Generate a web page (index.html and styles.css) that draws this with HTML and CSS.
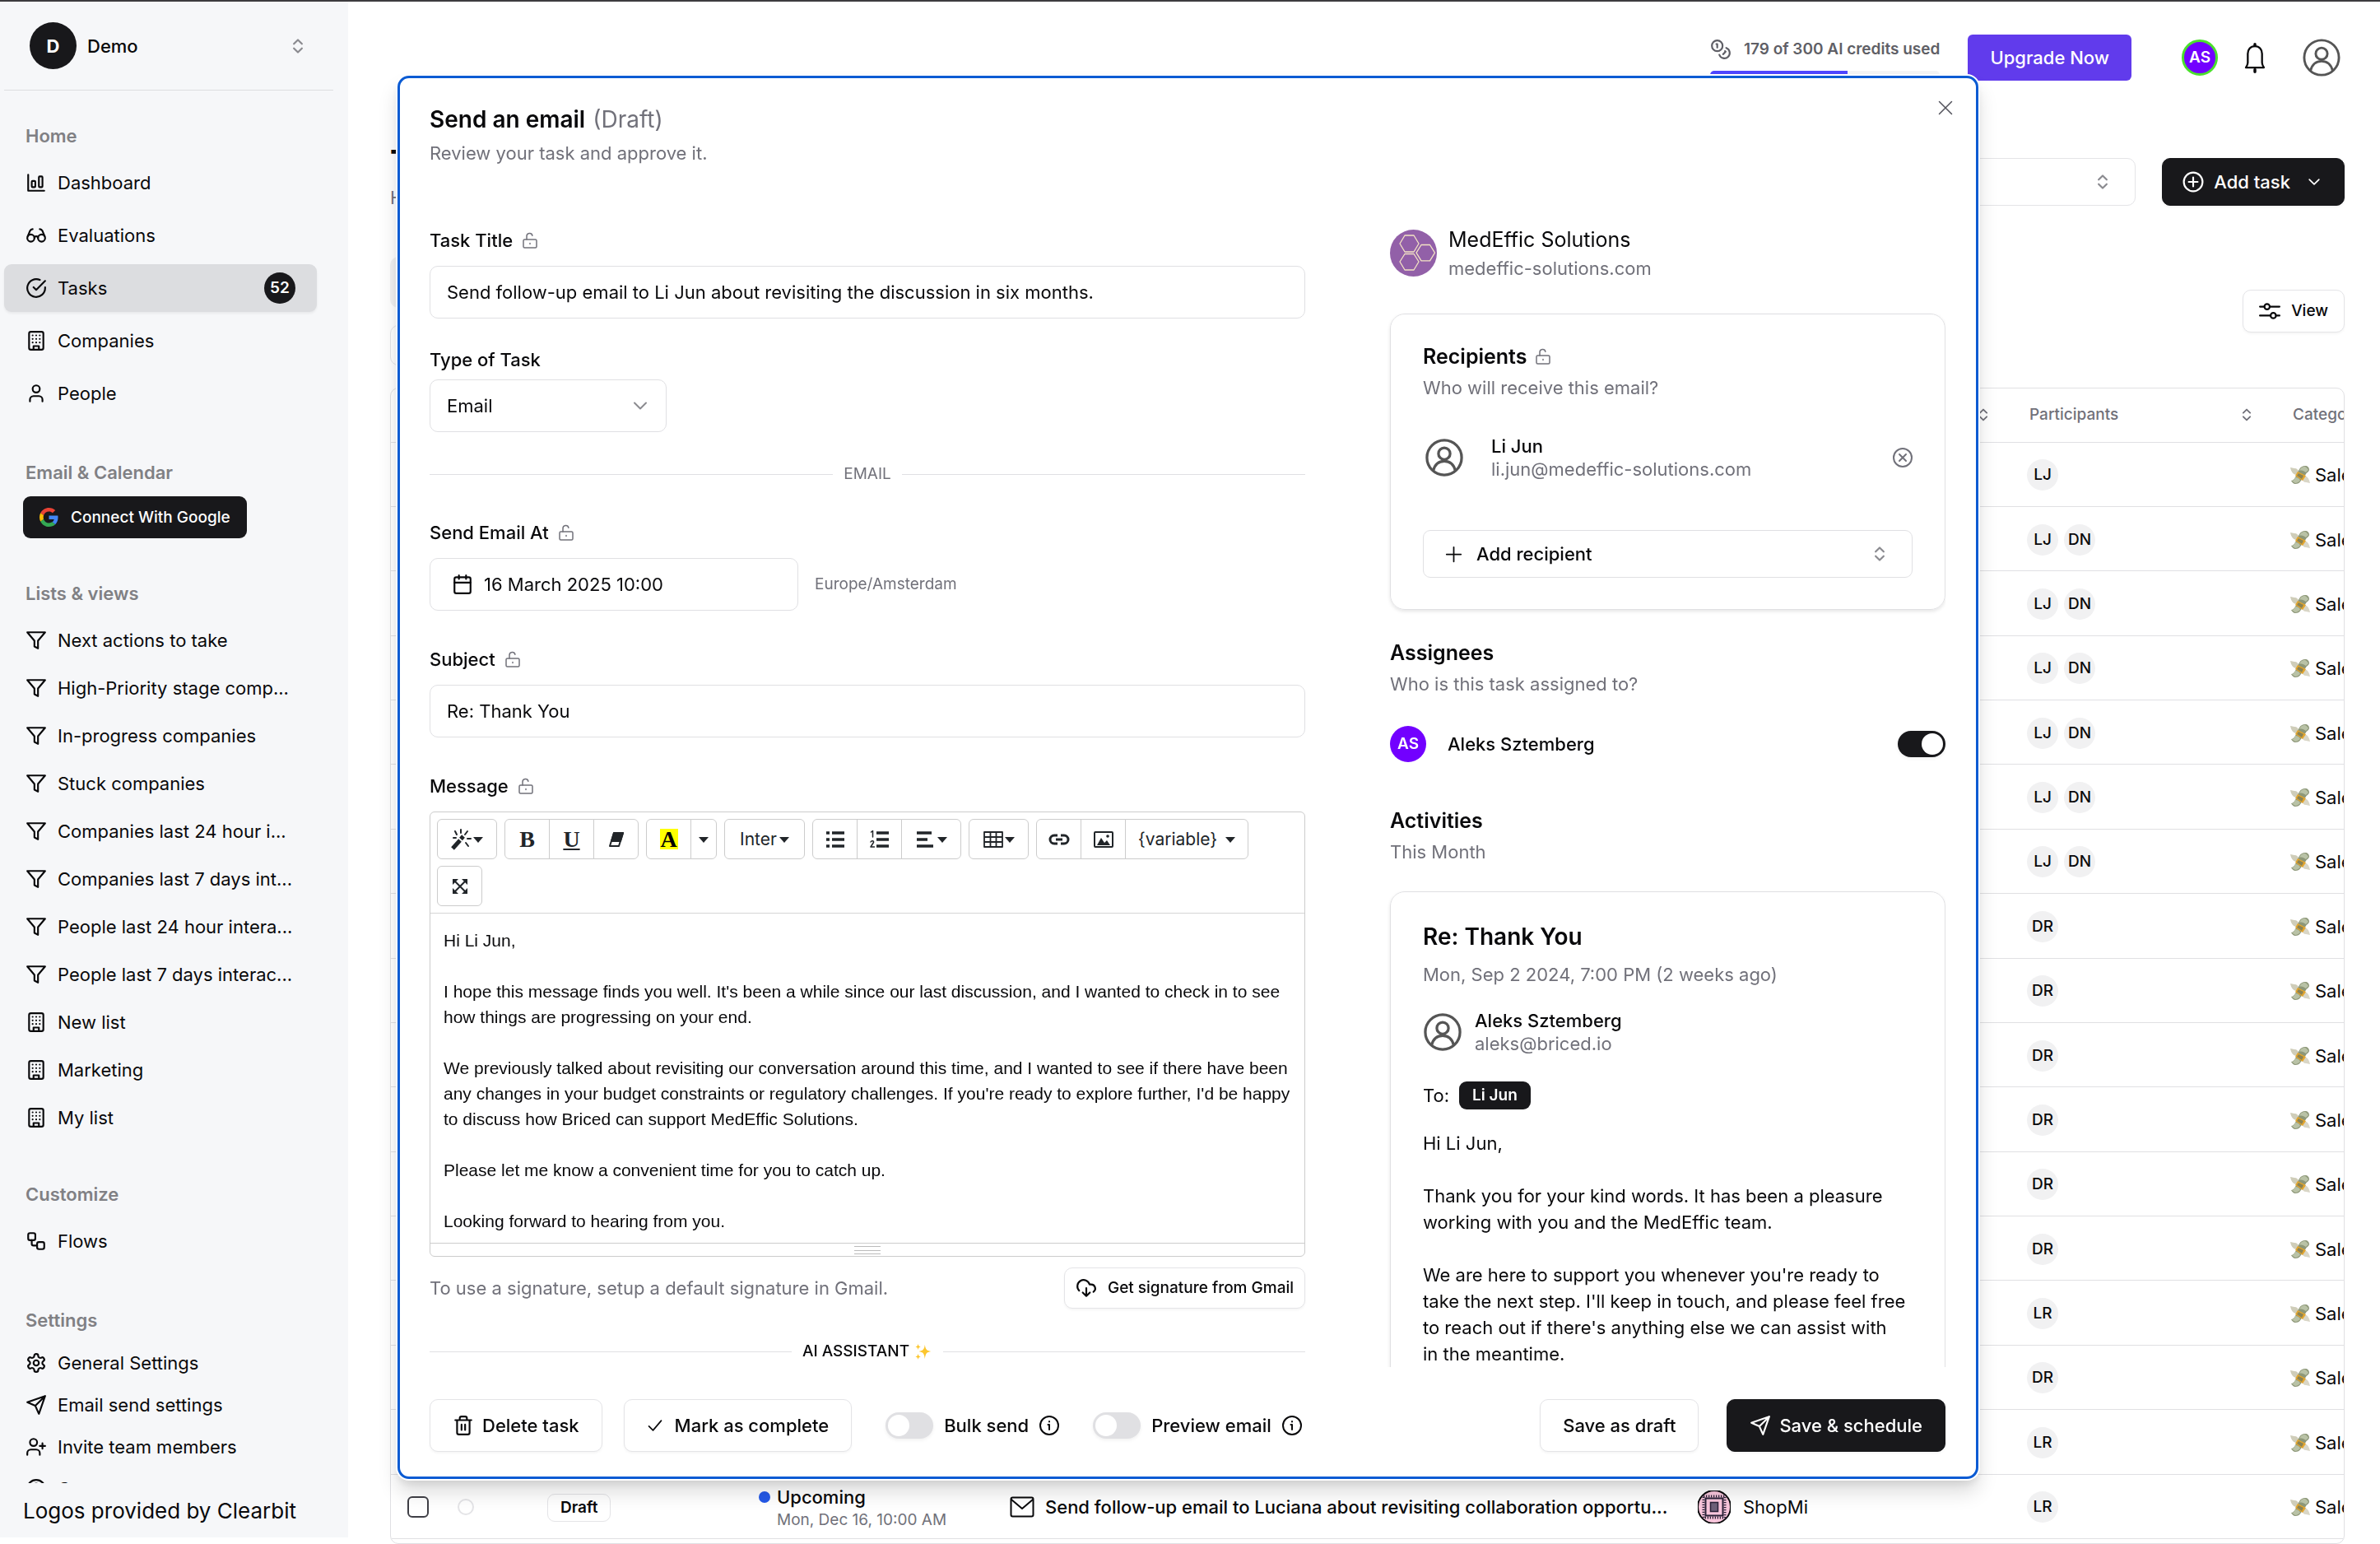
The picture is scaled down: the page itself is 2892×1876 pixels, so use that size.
FILE: index.html
```
<!DOCTYPE html>
<html lang="en">
<head>
  <meta charset="UTF-8">
  <meta name="viewport" content="width=device-width, initial-scale=1.0">
  <link rel="stylesheet" href="styles.css">
  <title>Tasks</title>
</head>
<body>

<svg class="sprite" aria-hidden="true">
  <symbol id="i-sort" viewBox="0 0 24 24"><path d="m7.500 9.500 4.500-4.500 4.500 4.500M7.500 14.500l4.500 4.500 4.500-4.500"/></symbol>
  <symbol id="i-chevron" viewBox="0 0 24 24"><path d="m5 8.500 7 7 7-7"/></symbol>
  <symbol id="i-chart" viewBox="0 0 24 24"><path d="M3 3v18h18"/><rect x="7" y="10" width="4" height="7" rx="1"/><rect x="15" y="5" width="4" height="12" rx="1"/></symbol>
  <symbol id="i-glasses" viewBox="0 0 24 24"><circle cx="6" cy="15" r="4"/><circle cx="18" cy="15" r="4"/><path d="M14 15a2 2 0 0 0-4 0M2.500 13 5 7c.7-1.300 1.400-2 3-2M21.500 13 19 7c-.7-1.300-1.500-2-3-2"/></symbol>
  <symbol id="i-task" viewBox="0 0 24 24"><path d="M22 11.080V12a10 10 0 1 1-5.930-9.140M22 4 12 14.010l-3-3"/></symbol>
  <symbol id="i-building" viewBox="0 0 24 24"><rect x="4" y="2" width="16" height="20" rx="2"/><path d="M9 22v-4h6v4M8 6h.01M12 6h.01M16 6h.01M8 10h.01M12 10h.01M16 10h.01M8 14h.01M12 14h.01M16 14h.01"/></symbol>
  <symbol id="i-user" viewBox="0 0 24 24"><path d="M19 21v-2a4 4 0 0 0-4-4H9a4 4 0 0 0-4 4v2"/><circle cx="12" cy="7" r="4"/></symbol>
  <symbol id="i-funnel" viewBox="0 0 24 24"><path d="M22 3H2l8 9.460V19l4 2v-8.540z"/></symbol>
  <symbol id="i-flow" viewBox="0 0 24 24"><rect x="3" y="3" width="8" height="8" rx="2"/><path d="M7 11v4a2 2 0 0 0 2 2h4"/><rect x="13" y="13" width="8" height="8" rx="2"/></symbol>
  <symbol id="i-gear" viewBox="0 0 24 24"><path d="M12.220 2h-.44a2 2 0 0 0-2 2v.18a2 2 0 0 1-1 1.730l-.43.25a2 2 0 0 1-2 0l-.15-.08a2 2 0 0 0-2.730.73l-.22.38a2 2 0 0 0 .73 2.730l.15.1a2 2 0 0 1 1 1.720v.51a2 2 0 0 1-1 1.740l-.15.09a2 2 0 0 0-.73 2.730l.22.38a2 2 0 0 0 2.730.73l.15-.08a2 2 0 0 1 2 0l.43.25a2 2 0 0 1 1 1.730V20a2 2 0 0 0 2 2h.44a2 2 0 0 0 2-2v-.18a2 2 0 0 1 1-1.730l.43-.25a2 2 0 0 1 2 0l.15.08a2 2 0 0 0 2.730-.73l.22-.39a2 2 0 0 0-.73-2.730l-.15-.08a2 2 0 0 1-1-1.740v-.5a2 2 0 0 1 1-1.740l.15-.09a2 2 0 0 0 .73-2.730l-.22-.38a2 2 0 0 0-2.730-.73l-.15.08a2 2 0 0 1-2 0l-.43-.25a2 2 0 0 1-1-1.730V4a2 2 0 0 0-2-2z"/><circle cx="12" cy="12" r="3"/></symbol>
  <symbol id="i-send" viewBox="0 0 24 24"><path d="m22 2-7 20-4-9-9-4zM22 2 11 13"/></symbol>
  <symbol id="i-invite" viewBox="0 0 24 24"><path d="M16 21v-2a4 4 0 0 0-4-4H6a4 4 0 0 0-4 4v2M19 8v6M22 11h-6"/><circle cx="9" cy="7" r="4"/></symbol>
  <symbol id="i-contact" viewBox="0 0 24 24"><circle cx="12" cy="12" r="10"/><circle cx="12" cy="9" r="3"/><path d="M6 20c1-4 11-4 12 0"/></symbol>
  <symbol id="i-coins" viewBox="0 0 24 24"><circle cx="8" cy="8" r="6"/><path d="M18.090 10.370A6 6 0 1 1 10.340 18M7 6h1v4M16.710 13.880l.7.71-2.820 2.820"/></symbol>
  <symbol id="i-bell" viewBox="0 0 24 32"><path d="M12 3.500c-4.700 0-7.500 3.600-7.500 8v9.500c0 2-1 3.500-2 5h19c-1-1.500-2-3-2-5v-9.500c0-4.400-2.800-8-7.500-8z"/><path d="M12 1.500v1.500M12 28v2.500" stroke-width="3"/></symbol>
  <symbol id="i-account" viewBox="0 0 24 24"><circle cx="12" cy="12" r="11"/><circle cx="12" cy="9.500" r="3.700"/><path d="M5 20.300c1-4 3.500-6 7-6s6 2 7 6"/></symbol>
  <symbol id="i-plus" viewBox="0 0 24 24"><path d="M12 2v20M2 12h20"/></symbol>
  <symbol id="i-plus-circle" viewBox="0 0 24 24"><circle cx="12" cy="12" r="10.500"/><path d="M12 7v10M7 12h10"/></symbol>
  <symbol id="i-x-circle" viewBox="0 0 24 24"><circle cx="12" cy="12" r="11"/><path d="m8 8 8 8M16 8l-8 8"/></symbol>
  <symbol id="i-x" viewBox="0 0 24 24"><path d="m2 2 20 20M22 2 2 22"/></symbol>
  <symbol id="i-sliders" viewBox="0 0 24 24"><circle cx="9" cy="7" r="3"/><circle cx="16" cy="17" r="3"/><path d="M1 7h5M12 7h11M1 17h12M19 17h4"/></symbol>
  <symbol id="i-lock" viewBox="0 0 20 20"><rect x="2" y="9" width="16" height="10" rx="1.500"/><path d="M6 9V5a3.500 3.500 0 0 1 6.900-.8M10 13.500v1"/></symbol>
  <symbol id="i-calendar" viewBox="0 0 24 24"><rect x="3" y="4" width="18" height="18" rx="2"/><path d="M16 2v4M8 2v4M3 10h18"/></symbol>
  <symbol id="i-cloud" viewBox="0 0 24 24"><path d="M4 14.899A7 7 0 1 1 15.710 8h1.790a4.500 4.500 0 0 1 2.500 8.242M12 12v9M8 17l4 4 4-4"/></symbol>
  <symbol id="i-trash" viewBox="0 0 24 24"><path d="M3 6h18M19 6v14a2 2 0 0 1-2 2H7a2 2 0 0 1-2-2V6M8 6V4a2 2 0 0 1 2-2h4a2 2 0 0 1 2 2v2M10 11v6M14 11v6"/></symbol>
  <symbol id="i-check" viewBox="0 0 24 24"><path d="m3 13 6 6L21 5"/></symbol>
  <symbol id="i-info" viewBox="0 0 24 24"><circle cx="12" cy="12" r="11"/><path d="M10.500 11h1.500v6M12 7v.5"/></symbol>
  <symbol id="i-mail" viewBox="0 0 30 26"><rect x="1.500" y="1.500" width="27" height="23" rx="2"/><path d="m2 4 13 11L28 4"/></symbol>
  <symbol id="i-caret" viewBox="0 0 12 8"><path d="M0 1h12L6 8z" fill="currentColor" stroke="none"/></symbol>
  <symbol id="i-money" viewBox="0 0 24 24">
    <g stroke="none">
      <path d="M0 3c2 0 3 1 5 1 3 0 5 2 6 5l-4 3C3 11 1 8 0 3z" fill="#cfcdb9"/>
      <path d="M24 22c-2 0-3-1-5-1-3 0-4-2-5-4l4-4c3 1 5 4 6 9z" fill="#d9d6c6"/>
      <path d="M11 5c2-3 4-4 7-4s5 2 5 5c-1 3-3 3-4 5l-6 8c-2 3-4 4-7 4-2 0-4-2-5-4 2 0 4-2 5-4z" fill="#8d9778"/>
      <path d="M12 5c2-3 4-3 6-3 2 1 3 2 4 4l-3 3c-3-2-5-3-8-2zM6 15c3 0 5 1 6 4-2 2-4 3-6 3-2-1-3-2-4-3 2 0 3-2 4-4z" fill="#b9c2a6"/>
      <path d="m9 8 10 5-4 6-9-6z" fill="#e3a52d"/>
      <path d="m10 10 6 3-2 4-6-4z" fill="#8a8354"/>
    </g>
  </symbol>
  <symbol id="i-sparkles" viewBox="0 0 24 24">
    <g stroke="none" fill="#fcc62d">
      <path d="M14 3c.8 6 2 8 8 9-6 1-7.200 3-8 10-.8-7-2-9-8-10 6-1 7.200-3 8-9z"/>
      <path d="M5 2c.4 2.600 1 3.600 3.500 4C6 6.400 5.400 7.400 5 10c-.4-2.600-1-3.600-3.500-4C4 5.600 4.600 4.600 5 2zM5 15c.4 2.600 1 3.600 3.500 4-2.500.4-3.100 1.400-3.500 4-.4-2.600-1-3.600-3.500-4 2.500-.4 3.100-1.400 3.500-4z"/>
    </g>
  </symbol>
</svg>

<div class="app">
  <aside class="sidebar">
    <div class="sidebar-scroll">
      <button class="workspace">
        <span class="workspace-logo">D</span>
        <span class="workspace-name">Demo</span>
        <svg class="icon faint"><use href="#i-sort"/></svg>
      </button>

      <h2 class="nav-title nav-home">Home</h2>
      <nav class="nav">
        <a href="#"><svg class="icon"><use href="#i-chart"/></svg>Dashboard</a>
        <a href="#"><svg class="icon"><use href="#i-glasses"/></svg>Evaluations</a>
        <a href="#" class="active"><svg class="icon"><use href="#i-task"/></svg>Tasks<span class="count">52</span></a>
        <a href="#"><svg class="icon"><use href="#i-building"/></svg>Companies</a>
        <a href="#"><svg class="icon"><use href="#i-user"/></svg>People</a>
      </nav>

      <h2 class="nav-title">Email &amp; Calendar</h2>
      <button class="google">
        <svg class="google-logo" viewBox="0 0 48 48">
          <path fill="#ea4335" d="M24 9.500c3.540 0 6.710 1.220 9.210 3.600l6.850-6.850C35.900 2.380 30.470 0 24 0 14.620 0 6.510 5.380 2.560 13.220l7.980 6.190C12.430 13.720 17.740 9.500 24 9.500z"/>
          <path fill="#4285f4" d="M46.980 24.550c0-1.570-.15-3.090-.38-4.550H24v9.020h12.940c-.58 2.960-2.260 5.480-4.780 7.180l7.730 6c4.510-4.180 7.090-10.360 7.090-17.650z"/>
          <path fill="#fbbc05" d="M10.530 28.590c-.48-1.450-.76-2.990-.76-4.590s.27-3.140.76-4.590l-7.980-6.190C.92 16.460 0 20.120 0 24c0 3.880.92 7.540 2.560 10.780l7.970-6.190z"/>
          <path fill="#34a853" d="M24 48c6.480 0 11.930-2.130 15.890-5.810l-7.730-6c-2.150 1.450-4.920 2.300-8.160 2.300-6.260 0-11.570-4.220-13.470-9.910l-7.980 6.190C6.510 42.620 14.620 48 24 48z"/>
        </svg>
        Connect With Google
      </button>

      <h2 class="nav-title">Lists &amp; views</h2>
      <nav class="nav views">
        <a href="#"><svg class="icon"><use href="#i-funnel"/></svg>Next actions to take</a>
        <a href="#"><svg class="icon"><use href="#i-funnel"/></svg>High-Priority stage comp...</a>
        <a href="#"><svg class="icon"><use href="#i-funnel"/></svg>In-progress companies</a>
        <a href="#"><svg class="icon"><use href="#i-funnel"/></svg>Stuck companies</a>
        <a href="#"><svg class="icon"><use href="#i-funnel"/></svg>Companies last 24 hour i...</a>
        <a href="#"><svg class="icon"><use href="#i-funnel"/></svg>Companies last 7 days int...</a>
        <a href="#"><svg class="icon"><use href="#i-funnel"/></svg>People last 24 hour intera...</a>
        <a href="#"><svg class="icon"><use href="#i-funnel"/></svg>People last 7 days interac...</a>
        <a href="#"><svg class="icon"><use href="#i-building"/></svg>New list</a>
        <a href="#"><svg class="icon"><use href="#i-building"/></svg>Marketing</a>
        <a href="#"><svg class="icon"><use href="#i-building"/></svg>My list</a>
      </nav>

      <h2 class="nav-title nav-customize">Customize</h2>
      <nav class="nav views">
        <a href="#"><svg class="icon"><use href="#i-flow"/></svg>Flows</a>
      </nav>

      <h2 class="nav-title">Settings</h2>
      <nav class="nav settings">
        <a href="#"><svg class="icon"><use href="#i-gear"/></svg>General Settings</a>
        <a href="#"><svg class="icon"><use href="#i-send"/></svg>Email send settings</a>
        <a href="#"><svg class="icon"><use href="#i-invite"/></svg>Invite team members</a>
        <a href="#"><svg class="icon"><use href="#i-contact"/></svg>Contact</a>
      </nav>
    </div>
    <p class="credit">Logos provided by Clearbit</p>
  </aside>

  <main class="main">
    <header class="topbar">
      <div class="credits">
        <label for="credits"><svg class="icon"><use href="#i-coins"/></svg>179 of 300 AI credits used</label>
        <progress id="credits" value="179" max="300"></progress>
      </div>
      <button class="upgrade">Upgrade Now</button>
      <span class="avatar avatar-ring">AS</span>
      <button class="plain bell" aria-label="Notifications"><svg><use href="#i-bell"/></svg></button>
      <button class="plain account" aria-label="Account"><svg><use href="#i-account"/></svg></button>
    </header>

    <div class="page-head">
      <div>
        <h1>Tasks</h1>
        <p>Here are your tasks</p>
      </div>
      <div class="page-actions">
        <button class="picker" aria-label="Filter by person"><svg class="icon faint"><use href="#i-sort"/></svg></button>
        <button class="btn dark add-task"><svg class="icon"><use href="#i-plus-circle"/></svg>Add task<svg class="icon-sm"><use href="#i-chevron"/></svg></button>
      </div>
    </div>

    <div class="table-tools">
      <div>
        <div class="tabs"></div>
        <input class="search" type="text" aria-label="Search tasks">
      </div>
      <button class="btn small view"><svg class="icon"><use href="#i-sliders"/></svg>View</button>
    </div>

    <div class="table-wrap">
      <table>
        <colgroup>
          <col class="c-check"><col class="c-state"><col class="c-status"><col class="c-due"><col class="c-title"><col class="c-company"><col class="c-people"><col class="c-category">
        </colgroup>
        <thead>
          <tr>
            <th></th><th></th><th></th><th></th><th></th>
            <th><div class="th"><span></span><svg class="icon-sort"><use href="#i-sort"/></svg></div></th>
            <th><div class="th"><span>Participants</span><svg class="icon-sort"><use href="#i-sort"/></svg></div></th>
            <th>Category</th>
          </tr>
        </thead>
        <tbody id="rows"></tbody>
      </table>
    </div>
  </main>
</div>

<div class="dialog" role="dialog" aria-labelledby="dialog-title">
  <header class="dialog-head">
    <h2 id="dialog-title">Send an email <span>(Draft)</span></h2>
    <p>Review your task and approve it.</p>
    <button class="plain close" aria-label="Close"><svg><use href="#i-x"/></svg></button>
  </header>

  <div class="dialog-body">
    <form class="form">
      <div class="field">
        <label for="title">Task Title <svg class="lock"><use href="#i-lock"/></svg></label>
        <input id="title" type="text" value="Send follow-up email to Li Jun about revisiting the discussion in six months.">
      </div>
      <div class="field type">
        <label for="type">Type of Task</label>
        <div class="select">
          <select id="type"><option>Email</option></select>
          <svg><use href="#i-chevron"/></svg>
        </div>
      </div>
      <div class="divider">EMAIL</div>
      <div class="field">
        <label for="date">Send Email At <svg class="lock"><use href="#i-lock"/></svg></label>
        <div class="date-row">
          <button type="button" id="date" class="date"><svg class="icon"><use href="#i-calendar"/></svg>16 March 2025 10:00</button>
          <span>Europe/Amsterdam</span>
        </div>
      </div>
      <div class="field">
        <label for="subject">Subject <svg class="lock"><use href="#i-lock"/></svg></label>
        <input id="subject" type="text" value="Re: Thank You">
      </div>
      <div class="field message">
        <label for="message">Message <svg class="lock"><use href="#i-lock"/></svg></label>
        <div class="editor">
          <div class="toolbar">
            <div class="group">
              <button type="button" class="wide" aria-label="Style">
                <svg class="tool" viewBox="0 0 26 26"><path d="m2 24 9-10" stroke-width="5" stroke-linecap="butt"/><path d="m12 12.500 3-3.500" stroke-width="5" stroke-linecap="butt"/><path d="M12 1v4M5 3l2 4M20 3l-3 4M20 12h4M18 17l3 4M3 11h3" stroke-width="2"/></svg><svg class="caret"><use href="#i-caret"/></svg>
              </button>
            </div>
            <div class="group">
              <button type="button" class="serif">B</button>
              <button type="button" class="serif underline">U</button>
              <button type="button" aria-label="Clear formatting"><svg class="tool" viewBox="0 0 26 26"><path d="M10 5h11l-5 16H5z"/><path d="M10 5h11l-3 10H7z" fill="currentColor"/></svg></button>
            </div>
            <div class="group">
              <button type="button" class="serif"><mark>A</mark></button>
              <button type="button" class="slim" aria-label="More colors"><svg class="caret"><use href="#i-caret"/></svg></button>
            </div>
            <div class="group">
              <button type="button" class="text">Inter<svg class="caret"><use href="#i-caret"/></svg></button>
            </div>
            <div class="group">
              <button type="button" aria-label="Bulleted list"><svg class="tool" viewBox="0 0 26 26"><path d="M9 5h15M9 13h15M9 21h15M2 5h4M2 13h4M2 21h4" stroke-width="3.500" stroke-linecap="butt"/></svg></button>
              <button type="button" aria-label="Numbered list"><svg class="tool" viewBox="0 0 26 26"><path d="M9 5h15M9 13h15M9 21h15" stroke-width="3.500" stroke-linecap="butt"/><path d="m2.500 4 2-1.500V10M2 16c1-2 4-1.500 3.500.5L2 22h4.500" stroke-width="1.500"/></svg></button>
              <button type="button" class="wide" aria-label="Paragraph"><svg class="tool" viewBox="0 0 26 26"><path d="M2 5h18M2 13h13M2 21h20" stroke-width="3.500" stroke-linecap="butt"/></svg><svg class="caret"><use href="#i-caret"/></svg></button>
            </div>
            <div class="group">
              <button type="button" class="wide" aria-label="Table"><svg class="tool" viewBox="0 0 26 26"><path d="M2 4h22v18H2zM2 10h22M2 16h22M9.500 4v18M16.500 4v18" stroke-width="1.800"/></svg><svg class="caret"><use href="#i-caret"/></svg></button>
            </div>
            <div class="group">
              <button type="button" aria-label="Link"><svg class="tool" viewBox="0 0 26 26"><path d="M11 8H7a5 5 0 0 0 0 10h4M15 8h4a5 5 0 0 1 0 10h-4M9 13h8" stroke-width="3" stroke-linecap="butt"/></svg></button>
              <button type="button" aria-label="Picture"><svg class="tool" viewBox="0 0 26 26"><rect x="2" y="4" width="22" height="18" rx="1"/><path d="m5 20 5-9 4 6 3-3 4 6z" fill="currentColor" stroke="none"/><circle cx="18" cy="9" r="1.800" fill="currentColor" stroke="none"/></svg></button>
              <button type="button" class="text variable">{variable}<svg class="caret"><use href="#i-caret"/></svg></button>
            </div>
            <div class="group">
              <button type="button" aria-label="Full screen"><svg class="tool" viewBox="0 0 26 26"><path d="m5 5 16 16M21 5 5 21" stroke-width="2"/><path d="M4 4h7L4 11zM22 4v7l-7-7zM4 22v-7l7 7zM22 22h-7l7-7z" fill="currentColor" stroke="none"/></svg></button>
            </div>
          </div>
          <textarea id="message">Hi Li Jun,

I hope this message finds you well. It's been a while since our last discussion, and I wanted to check in to see how things are progressing on your end.

We previously talked about revisiting our conversation around this time, and I wanted to see if there have been any changes in your budget constraints or regulatory challenges. If you're ready to explore further, I'd be happy to discuss how Briced can support MedEffic Solutions.

Please let me know a convenient time for you to catch up.

Looking forward to hearing from you.</textarea>
          <div class="resize"><i></i><i></i><i></i></div>
        </div>
      </div>
      <div class="signature">
        <p>To use a signature, setup a default signature in Gmail.</p>
        <button type="button" class="btn small"><svg class="icon"><use href="#i-cloud"/></svg>Get signature from Gmail</button>
      </div>
      <div class="divider assistant"><span>AI ASSISTANT</span><svg><use href="#i-sparkles"/></svg></div>
    </form>

    <div class="side">
      <div class="company">
        <svg class="company-logo" viewBox="0 0 57 57">
          <circle cx="28.500" cy="28.500" r="28.500" fill="#9260a8"/>
          <path fill="none" stroke="#f3e3c4" stroke-width="1.300" d="M18 7h11l6 10-6 10H18l-6-10zM18 29.500h11l6 9.500-6 10H18l-6-10zM38 18.500h10.500l6 9.700-6 9.700H38l-6-9.700z"/>
        </svg>
        <div>
          <p class="company-name">MedEffic Solutions</p>
          <p class="muted">medeffic-solutions.com</p>
        </div>
      </div>

      <section class="card recipients">
        <h3>Recipients <svg class="lock"><use href="#i-lock"/></svg></h3>
        <p class="muted">Who will receive this email?</p>
        <div class="person">
          <svg class="person-icon"><use href="#i-account"/></svg>
          <div>
            <p class="name">Li Jun</p>
            <p class="muted">li.jun@medeffic-solutions.com</p>
          </div>
          <button class="plain remove" aria-label="Remove recipient"><svg><use href="#i-x-circle"/></svg></button>
        </div>
        <button class="add-recipient"><svg class="plus"><use href="#i-plus"/></svg>Add recipient<svg class="icon faint"><use href="#i-sort"/></svg></button>
      </section>

      <section class="assignees">
        <h3>Assignees</h3>
        <p class="muted">Who is this task assigned to?</p>
        <div class="assignee">
          <span class="avatar">AS</span>
          <label for="assigned">Aleks Sztemberg</label>
          <input id="assigned" class="switch" type="checkbox" checked>
        </div>
      </section>

      <section class="activities">
        <h3>Activities</h3>
        <p class="muted">This Month</p>
        <article class="card mail">
          <h4>Re: Thank You</h4>
          <p class="muted">Mon, Sep 2 2024, 7:00 PM (2 weeks ago)</p>
          <div class="sender">
            <svg class="person-icon"><use href="#i-account"/></svg>
            <div>
              <p class="name">Aleks Sztemberg</p>
              <p class="muted">aleks@briced.io</p>
            </div>
          </div>
          <div class="to">To: <span class="badge">Li Jun</span></div>
          <div class="mail-text">
            <p>Hi Li Jun,</p>
            <p>Thank you for your kind words. It has been a pleasure working with you and the MedEffic team.</p>
            <p>We are here to support you whenever you're ready to take the next step. I'll keep in touch, and please feel free to reach out if there's anything else we can assist with<br>in the meantime.</p>
          </div>
        </article>
      </section>
    </div>
  </div>

  <footer class="dialog-foot">
    <button class="btn"><svg class="icon"><use href="#i-trash"/></svg>Delete task</button>
    <button class="btn complete"><svg class="icon-sm"><use href="#i-check"/></svg>Mark as complete</button>
    <div class="option">
      <input id="bulk" class="switch" type="checkbox">
      <label for="bulk">Bulk send</label>
      <svg class="info"><use href="#i-info"/></svg>
    </div>
    <div class="option">
      <input id="preview" class="switch" type="checkbox">
      <label for="preview">Preview email</label>
      <svg class="info"><use href="#i-info"/></svg>
    </div>
    <button class="btn draft">Save as draft</button>
    <button class="btn dark"><svg class="icon"><use href="#i-send"/></svg>Save &amp; schedule</button>
  </footer>
</div>

<script>
  const participants = [
    ['LJ'],
    ['LJ', 'DN'], ['LJ', 'DN'], ['LJ', 'DN'], ['LJ', 'DN'], ['LJ', 'DN'], ['LJ', 'DN'],
    ['DR'], ['DR'], ['DR'], ['DR'], ['DR'], ['DR'],
    ['LR'], ['DR'], ['LR'], ['LR']
  ];

  // the open task covers every row but the last one
  const lastRow = `
    <td><input type="checkbox" class="check" aria-label="Select task"></td>
    <td><span class="state"></span></td>
    <td><span class="status">Draft</span></td>
    <td><div class="due"><i></i><div><p class="name">Upcoming</p><p>Mon, Dec 16, 10:00 AM</p></div></div></td>
    <td><div class="task-title"><svg><use href="#i-mail"/></svg>Send follow-up email to Luciana about revisiting collaboration opportu...</div></td>
    <td><div class="shop">
      <svg viewBox="0 0 40 40"><circle cx="20" cy="20" r="20" fill="#f9c6dc"/>
        <path d="M7 7h26v26H7z" fill="none" stroke="#2b2238" stroke-width="3" stroke-dasharray="1.300 1.700"/>
        <path d="M9.500 9.500h21v21h-21z" fill="#f9c6dc" stroke="#2b2238" stroke-width="2"/>
        <path d="M15.500 14.500h9v11h-9z" fill="#6d6078" stroke="#2b2238" stroke-width="1.500"/></svg>ShopMi</div></td>`;

  document.getElementById('rows').innerHTML = participants.map((people, index) => `
    <tr>
      ${index === participants.length - 1 ? lastRow : '<td></td>'.repeat(6)}
      <td><div class="people">${people.map(p => `<span>${p}</span>`).join('')}</div></td>
      <td><div class="category"><svg><use href="#i-money"/></svg>Sales</div></td>
    </tr>`).join('');
</script>

</body>
</html>
```
FILE: styles.css
```
* {
  box-sizing: border-box;
}

body {
  margin: 0;
  height: 100vh;
  overflow: hidden;
  border-top: 2px solid #3d3b3f;
  font-family: Inter, sans-serif;
  font-size: 22px;
  line-height: 32px;
  color: #09090b;
  background: #fff;
}

h1, h2, h3, h4, p {
  margin: 0;
}

a {
  color: inherit;
  text-decoration: none;
}

button, input, select, textarea {
  font: inherit;
  color: inherit;
}

button {
  margin: 0;
  padding: 0;
  cursor: pointer;
}

svg {
  flex: none;
  fill: none;
  stroke: currentColor;
  stroke-width: 2;
  stroke-linecap: round;
  stroke-linejoin: round;
}

.sprite {
  position: absolute;
  width: 0;
  height: 0;
}

.icon {
  width: 26px;
  height: 26px;
}

.icon-sm {
  width: 20px;
  height: 20px;
}

.faint {
  color: #8a8a8f;
}

.muted {
  color: #71717a;
}

.name {
  font-weight: 500;
}

.plain {
  display: flex;
  border: none;
  background: none;
}

.app {
  display: flex;
  height: 100%;
}

/* sidebar */

.sidebar {
  display: flex;
  flex-direction: column;
  flex: none;
  width: 423px;
  margin-bottom: 8px;
  background: #f6f7f9;
}

.sidebar-scroll {
  flex: 1;
  min-height: 0;
  overflow: hidden;
  padding-left: 5px;
}

.workspace {
  display: flex;
  align-items: center;
  width: 400px;
  height: 108px;
  padding: 0 30px 0 31px;
  border: none;
  border-bottom: 1px solid #dcdde0;
  background: none;
}

.workspace-logo {
  display: grid;
  place-items: center;
  width: 57px;
  height: 57px;
  margin-right: 13px;
  border-radius: 50%;
  background: #18181b;
  color: #fff;
  font-weight: 700;
}

.workspace-name {
  margin-right: auto;
  font-weight: 500;
}

.nav-title {
  margin: 51px 0 0 26px;
  font-size: 22px;
  font-weight: 600;
  color: #808084;
}

.nav-home {
  margin-top: 39px;
}

.nav-customize {
  margin-top: 48px;
}

.nav {
  display: grid;
  gap: 6px;
  width: 380px;
  margin-top: 12px;
}

.nav a {
  display: flex;
  align-items: center;
  gap: 13px;
  height: 58px;
  padding: 0 26px;
  border-radius: 9px;
  white-space: nowrap;
}

.nav .active {
  background: #dcdde0;
  box-shadow: 0 2px 3px rgba(0, 0, 0, 0.06);
}

.count {
  display: grid;
  place-items: center;
  width: 38px;
  height: 38px;
  margin-left: auto;
  border-radius: 50%;
  background: #18181b;
  color: #fff;
  font-size: 19px;
  font-weight: 600;
}

.views {
  gap: 0;
}

.settings {
  gap: 0;
  margin-top: 10px;
}

.settings a {
  height: 51px;
}

.google {
  display: flex;
  align-items: center;
  gap: 15px;
  height: 51px;
  margin: 13px 0 0 23px;
  padding: 0 20px;
  border: none;
  border-radius: 9px;
  background: #18181b;
  color: #fff;
  font-size: 19px;
  font-weight: 500;
}

.google-logo {
  width: 23px;
  height: 23px;
  stroke: none;
}

.credit {
  height: 66px;
  padding: 18px 0 0 28px;
  font-size: 26px;
}

/* page behind the dialog */

.main {
  display: flex;
  flex-direction: column;
  flex: 1;
  min-width: 0;
  padding: 0 43px 0 51px;
}

.topbar {
  display: flex;
  align-items: center;
  justify-content: flex-end;
  padding: 40px 5px 0 0;
}

.credits {
  margin-right: 34px;
  font-size: 19px;
  font-weight: 600;
  color: #5f5f66;
}

.credits label {
  display: flex;
  align-items: center;
  gap: 15px;
}

.credits progress {
  display: block;
  width: 100%;
  height: 10px;
  margin-top: 10px;
  border: none;
  border-radius: 5px;
  overflow: hidden;
  appearance: none;
}

.credits progress::-webkit-progress-bar {
  background: #f4f4f5;
}

.credits progress::-webkit-progress-value {
  background: #4f46ff;
}

.upgrade {
  height: 56px;
  margin-right: 61px;
  padding: 0 27px;
  border: none;
  border-radius: 6px;
  background: #613bec;
  color: #fff;
  font-weight: 500;
}

.avatar {
  display: grid;
  place-items: center;
  flex: none;
  width: 44px;
  height: 44px;
  border-radius: 50%;
  background: #7200ff;
  color: #fff;
  font-size: 19px;
  font-weight: 600;
}

.avatar-ring {
  border: 3px solid #4be02c;
}

.bell {
  margin-left: 31px;
}

.bell svg {
  width: 28px;
  height: 37px;
}

.account {
  margin-left: 44px;
  color: #555;
}

.account svg {
  width: 46px;
  height: 46px;
  stroke-width: 1.5;
}

.page-head {
  display: flex;
  justify-content: space-between;
  margin-top: 74px;
}

.page-head h1 {
  font-size: 38px;
  line-height: 48px;
  margin-bottom: 4px;
}

.page-head p {
  color: #71717a;
}

.page-actions {
  display: flex;
  gap: 32px;
  margin-top: 20px;
}

.picker {
  display: flex;
  align-items: center;
  justify-content: flex-end;
  width: 400px;
  height: 58px;
  padding-right: 26px;
  border: 1px solid #e4e4e7;
  border-radius: 10px;
  background: #fff;
}

.btn {
  display: flex;
  align-items: center;
  gap: 10px;
  height: 64px;
  padding: 0 26px;
  border: 1px solid #e4e4e7;
  border-radius: 10px;
  background: #fff;
  font-weight: 500;
  white-space: nowrap;
  box-shadow: 0 2px 3px rgba(0, 0, 0, 0.04);
}

.dark {
  border-color: #18181b;
  background: #18181b;
  color: #fff;
}

.small {
  height: 52px;
  gap: 13px;
  padding: 0 19px;
  font-size: 19px;
}

.add-task {
  height: 58px;
  gap: 12px;
  padding: 0 26px 0 24px;
}

.add-task .icon-sm {
  margin-left: 7px;
}

.table-tools {
  display: flex;
  align-items: center;
  justify-content: space-between;
  margin: 56px 0 27px;
}

.tabs {
  width: 400px;
  height: 62px;
  margin-bottom: 21px;
  border-radius: 10px;
  background: #f1f1f2;
}

.search {
  display: block;
  width: 400px;
  height: 49px;
  border: 1px solid #e4e4e7;
  border-radius: 10px;
}

.table-wrap {
  flex: 1;
  min-height: 0;
  padding-bottom: 5px;
  border: 1px solid #e0e0e3;
  border-radius: 10px;
  overflow: hidden;
}

table {
  width: calc(100% + 100px);
  height: 100%;
  table-layout: fixed;
  border-collapse: collapse;
}

.c-check { width: 61px; }
.c-state { width: 109px; }
.c-status { width: 257px; }
.c-due { width: 305px; }
.c-company { width: 400px; }
.c-people { width: 320px; }
.c-category { width: 185px; }

th, td {
  padding: 0 0 0 20px;
  border-bottom: 1px solid #e0e0e3;
  text-align: left;
  white-space: nowrap;
}

td {
  height: 78px;
  padding-top: 2px;
}

th {
  height: 65px;
  padding-left: 23px;
  font-size: 19px;
  font-weight: 500;
  color: #71717a;
}

.th {
  display: flex;
  align-items: center;
  justify-content: space-between;
  padding-right: 22px;
}

.icon-sort {
  width: 22px;
  height: 22px;
}

.people, .category, .due, .task-title, .shop {
  display: flex;
  align-items: center;
}

.people {
  gap: 7px;
}

.people span {
  display: grid;
  place-items: center;
  width: 38px;
  height: 38px;
  border-radius: 50%;
  background: #f1f1f2;
  font-size: 19px;
  font-weight: 500;
}

.category {
  gap: 6px;
}

.category svg {
  width: 24px;
  height: 24px;
}

.check {
  display: block;
  width: 26px;
  height: 26px;
  margin: 0;
  border: 2px solid #3f3f46;
  border-radius: 6px;
  appearance: none;
}

.state {
  display: block;
  width: 20px;
  height: 20px;
  border: 2px solid #e4e4e7;
  border-radius: 50%;
}

.status {
  display: inline-block;
  padding: 0 15px;
  border: 1px solid #e4e4e7;
  border-radius: 9px;
  font-size: 19px;
  font-weight: 600;
}

.due {
  align-items: flex-start;
  gap: 8px;
  padding-top: 3px;
  line-height: 28px;
}

.due i {
  width: 14px;
  height: 14px;
  margin-top: 7px;
  border-radius: 50%;
  background: #2459e8;
}

.due p + p {
  font-size: 19px;
  color: #71717a;
}

.task-title {
  gap: 13px;
  font-weight: 500;
}

.task-title svg {
  width: 30px;
  height: 26px;
}

.shop {
  gap: 15px;
}

.shop svg {
  width: 40px;
  height: 40px;
  stroke-linecap: butt;
  stroke-linejoin: miter;
}

/* dialog */

.dialog {
  position: fixed;
  top: 92px;
  right: 488px;
  bottom: 79px;
  left: 483px;
  display: flex;
  flex-direction: column;
  padding: 30px 37px 30px 36px;
  border: 3px solid #0b5bd3;
  border-radius: 14px;
  background: #fff;
  box-shadow: 0 0 0 2px #fff, 0 16px 24px rgba(0, 0, 0, 0.14), 0 6px 10px rgba(0, 0, 0, 0.08);
}

.dialog-head {
  position: relative;
  margin-bottom: 74px;
}

.dialog-head h2 {
  margin-bottom: 5px;
  font-size: 28px;
  line-height: 40px;
  font-weight: 600;
}

.dialog-head h2 span {
  margin-left: 2px;
  font-weight: 400;
  color: #71717a;
}

.dialog-head p {
  color: #71717a;
}

.close {
  position: absolute;
  top: -3px;
  right: -9px;
  color: #52525b;
}

.close svg {
  width: 18px;
  height: 18px;
}

.dialog-body {
  display: grid;
  grid-template-columns: minmax(0, 1fr) 675px;
  column-gap: 103px;
  flex: 1;
  min-height: 0;
  overflow: hidden;
}

.field {
  margin-bottom: 43px;
}

.field label {
  display: flex;
  align-items: center;
  gap: 11px;
  margin-bottom: 15px;
  font-weight: 500;
}

.lock {
  width: 20px;
  height: 20px;
  color: #71717a;
  stroke-width: 1.5;
}

.field > input, .select select, .date {
  display: block;
  width: 100%;
  height: 64px;
  padding: 0 20px;
  border: 1px solid #e0e0e3;
  border-radius: 10px;
  background: #fff;
}

.field:first-child {
  margin-bottom: 34px;
}

.type {
  margin-bottom: 39px;
}

.type label {
  margin-bottom: 8px;
}

.select {
  display: grid;
  align-items: center;
  width: 288px;
}

.select select, .select svg {
  grid-area: 1 / 1;
}

.select select {
  appearance: none;
}

.select svg {
  justify-self: end;
  width: 24px;
  height: 24px;
  margin-right: 20px;
  color: #8a8a8f;
  pointer-events: none;
}

.divider {
  display: flex;
  align-items: center;
  gap: 13px;
  margin-bottom: 43px;
  font-size: 19px;
  line-height: 24px;
  color: #71717a;
}

.divider::before, .divider::after {
  content: "";
  flex: 1;
  height: 1px;
  background: #e0e0e3;
}

.assistant {
  color: #09090b;
  font-weight: 500;
}

.assistant svg {
  width: 22px;
  height: 22px;
  margin-left: -7px;
}

.date-row {
  display: flex;
  align-items: center;
  gap: 20px;
  font-size: 19px;
  color: #71717a;
}

.date {
  display: flex;
  align-items: center;
  gap: 13px;
  width: 448px;
  padding: 0 26px;
  font-size: 22px;
  color: #09090b;
}

.message {
  margin-bottom: 13px;
}

.editor {
  border: 1px solid #ccc;
  border-radius: 6px;
}

.toolbar {
  display: flex;
  flex-wrap: wrap;
  gap: 8px 9px;
  padding: 8px;
  border-bottom: 1px solid #d5d5d5;
}

.group {
  display: flex;
}

.group button {
  display: flex;
  align-items: center;
  justify-content: center;
  gap: 3px;
  width: 55px;
  height: 49px;
  margin-right: -1px;
  border: 1px solid #ccc;
  background: #fff;
  color: #212529;
}

.group button:first-child {
  border-radius: 6px 0 0 6px;
}

.group button:last-child {
  margin-right: 0;
  border-radius: 0 6px 6px 0;
}

.group button:only-child {
  border-radius: 6px;
}

.group .wide {
  width: 73px;
  gap: 1px;
}

.group .slim {
  width: 32px;
}

.group .text {
  width: 98px;
  font-size: 21px;
}

.group .variable {
  width: 150px;
  gap: 10px;
}

.group .serif {
  font-family: "Liberation Serif", serif;
  font-size: 28px;
  font-weight: 700;
}

.group .underline {
  text-decoration: underline;
}

.serif mark {
  width: 22px;
  line-height: 25px;
  background: #ff0;
}

.tool {
  width: 26px;
  height: 26px;
}

.caret {
  width: 12px;
  height: 8px;
}

textarea {
  display: block;
  width: 100%;
  height: 400px;
  padding: 17px 16px 0;
  border: none;
  resize: none;
  overflow: hidden;
  font-family: "Liberation Sans", sans-serif;
  font-size: 21px;
  line-height: 31px;
}

.resize {
  display: grid;
  gap: 2px;
  justify-content: center;
  height: 16px;
  padding-top: 3px;
  border-top: 1px solid #ccc;
}

.resize i {
  width: 32px;
  height: 1px;
  background: #bbb;
}

.signature {
  display: flex;
  align-items: center;
  justify-content: space-between;
  margin-bottom: 40px;
  color: #71717a;
}

.signature .btn {
  height: 50px;
  padding: 0 13px;
  color: #09090b;
}

/* right column of the dialog */

.company {
  display: flex;
  gap: 14px;
  margin-bottom: 35px;
  line-height: 40px;
}

.company-logo {
  width: 57px;
  height: 57px;
  margin-top: 3px;
  stroke: none;
}

.company-name {
  font-size: 25px;
  line-height: 30px;
}

.card {
  padding: 33px 39px 38px;
  border: 1px solid #e0e0e3;
  border-radius: 18px;
  box-shadow: 0 2px 4px rgba(0, 0, 0, 0.1);
}

.side h3 {
  display: flex;
  align-items: center;
  gap: 10px;
  margin-bottom: 4px;
  font-size: 25px;
  line-height: 36px;
  font-weight: 600;
}

.person, .sender {
  display: flex;
  align-items: center;
  line-height: 28px;
}

.person {
  margin: 41px 0 60px;
}

.person-icon {
  width: 46px;
  height: 46px;
  margin: 0 34px 0 3px;
  color: #555;
  stroke-width: 1.7;
}

.remove {
  margin-left: auto;
  color: #71717a;
}

.remove svg {
  width: 24px;
  height: 24px;
}

.add-recipient {
  display: flex;
  align-items: center;
  gap: 17px;
  width: 100%;
  height: 58px;
  padding: 0 26px;
  border: 1px solid #e0e0e3;
  border-radius: 9px;
  background: #fff;
  font-weight: 500;
}

.plus {
  width: 21px;
  height: 21px;
}

.add-recipient .faint {
  margin-left: auto;
}

.assignees {
  margin-top: 34px;
}

.assignee {
  display: flex;
  align-items: center;
  gap: 26px;
  margin: 35px 0 53px;
  font-weight: 500;
}

.switch {
  display: flex;
  align-items: center;
  flex: none;
  width: 58px;
  height: 32px;
  margin: 0;
  padding: 0 3px;
  border-radius: 16px;
  background: #e0e0e3;
  box-shadow: 0 2px 4px rgba(0, 0, 0, 0.06);
  appearance: none;
}

.switch::before {
  content: "";
  width: 26px;
  height: 26px;
  border-radius: 50%;
  background: #fff;
}

.switch:checked {
  justify-content: flex-end;
  background: #18181b;
}

.assignee .switch {
  margin-left: auto;
}

.mail {
  margin-top: 32px;
  padding-top: 34px;
}

.mail h4 {
  margin-bottom: 10px;
  font-size: 28px;
  line-height: 40px;
  font-weight: 600;
}

.sender {
  margin: 26px 0 32px;
}

.sender .person-icon {
  margin: 0 16px 0 1px;
}

.to {
  display: flex;
  align-items: center;
  gap: 12px;
  margin-bottom: 25px;
}

.badge {
  padding: 1px 16px;
  border-radius: 9px;
  background: #18181b;
  color: #fff;
  font-size: 19px;
  font-weight: 600;
}

.mail-text p {
  margin-bottom: 32px;
}

.dialog-foot {
  display: flex;
  align-items: center;
  margin-top: 39px;
  font-weight: 500;
}

.dialog-foot .btn {
  padding: 0 27px;
}

.complete {
  margin-left: 26px;
  gap: 14px;
}

.option {
  display: flex;
  align-items: center;
  gap: 13px;
  margin-left: 41px;
}

.info {
  width: 24px;
  height: 24px;
}

.draft {
  margin: 0 34px 0 auto;
}
```
